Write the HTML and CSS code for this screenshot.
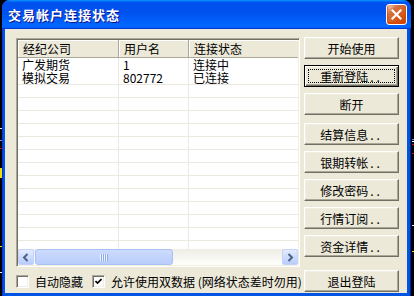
FILE: index.html
```html
<!DOCTYPE html>
<html lang="zh-CN">
<head>
  <meta charset="UTF-8">
  <title>交易帐户连接状态</title>
  <link rel="stylesheet" href="styles.css">
</head>
<body>
  <!-- chart behind the dialog -->
  <div class="chart">
    <span class="mark white" style="left:0;top:128px"></span>
    <span class="mark blue" style="left:0;top:140px"></span>
    <span class="mark red" style="left:0;top:148px"></span>
    <span class="mark yellow tall" style="left:0;top:168px"></span>
    <span class="mark yellow" style="left:0;top:246px"></span>
    <span class="mark white" style="left:0;top:272px"></span>
    <span class="mark blue" style="right:0;top:139px"></span>
    <span class="mark white" style="right:0;top:141px"></span>
    <span class="mark red" style="right:0;top:144px"></span>
    <span class="mark red" style="right:0;top:153px"></span>
    <span class="mark white" style="right:0;top:225px"></span>
    <span class="mark yellow" style="right:0;top:251px"></span>
  </div>

  <div class="window">
    <div class="titlebar">
      <span class="title">交易帐户连接状态</span>
      <button class="close" aria-label="关闭">
        <svg width="11" height="11" viewBox="0 0 11 11">
          <path d="M1.5 1.5 L9.5 9.5 M9.5 1.5 L1.5 9.5" stroke="#fff" stroke-width="2.2" stroke-linecap="square"/>
        </svg>
      </button>
    </div>

    <div class="client">
      <div class="left">
        <div class="listview">
          <div class="lv-row lv-head">
            <div>经纪公司</div><div>用户名</div><div>连接状态</div>
          </div>
          <div class="lv-body">
            <div class="lv-row item"><div>广发期货</div><div>1</div><div>连接中</div></div>
            <div class="lv-row item"><div>模拟交易</div><div>802772</div><div>已连接</div></div>
            <div class="lv-row empty"><div></div><div></div><div></div></div>
            <div class="lv-row empty"><div></div><div></div><div></div></div>
            <div class="lv-row empty"><div></div><div></div><div></div></div>
            <div class="lv-row empty"><div></div><div></div><div></div></div>
            <div class="lv-row empty"><div></div><div></div><div></div></div>
            <div class="lv-row empty"><div></div><div></div><div></div></div>
            <div class="lv-row empty"><div></div><div></div><div></div></div>
            <div class="lv-row empty"><div></div><div></div><div></div></div>
            <div class="lv-row empty"><div></div><div></div><div></div></div>
            <div class="lv-row empty"><div></div><div></div><div></div></div>
            <div class="lv-row empty"><div></div><div></div><div></div></div>
            <div class="lv-row empty"><div></div><div></div><div></div></div>
            <div class="lv-row empty"><div></div><div></div><div></div></div>
          </div>
          <div class="hscroll">
            <span class="sb-btn">
              <svg width="8" height="9" viewBox="0 0 8 9"><path d="M5.5 1 L2 4.5 L5.5 8" fill="none" stroke="#4d6185" stroke-width="2"/></svg>
            </span>
            <div class="sb-track">
              <span class="sb-thumb"><span class="grip"></span></span>
            </div>
            <span class="sb-btn">
              <svg width="8" height="9" viewBox="0 0 8 9"><path d="M2.5 1 L6 4.5 L2.5 8" fill="none" stroke="#4d6185" stroke-width="2"/></svg>
            </span>
          </div>
        </div>

        <div class="options">
          <label class="check"><span class="box"></span>自动隐藏</label>
          <label class="check">
            <span class="box">
              <svg width="7" height="7" viewBox="0 0 7 7"><path d="M0.5 3 L2.5 5 L6.5 1" fill="none" stroke="#000" stroke-width="1.6"/></svg>
            </span>允许使用双数据 (网络状态差时勿用)
          </label>
        </div>
      </div>

      <div class="buttons">
        <button class="btn">开始使用</button>
        <button class="btn default">重新登陆<span class="dots">..</span></button>
        <button class="btn">断开</button>
        <button class="btn sep">结算信息<span class="dots">..</span></button>
        <button class="btn">银期转帐<span class="dots">..</span></button>
        <button class="btn">修改密码<span class="dots">..</span></button>
        <button class="btn">行情订阅<span class="dots">..</span></button>
        <button class="btn">资金详情<span class="dots">..</span></button>
        <button class="btn exit">退出登陆</button>
      </div>
    </div>
  </div>
</body>
</html>
```

FILE: styles.css
```css
body {
    margin: 0;
    width: 414px;
    height: 296px;
    overflow: hidden;
    position: relative;
    background-color: #000;
    font-family: "Noto Sans CJK SC", "Noto Sans", sans-serif;
    font-size: 12px;
    color: #000;
}

/* bits of the chart window showing round the dialog */
.mark {
    position: absolute;
    width: 2px;
    height: 1px;
}
.mark.white { background-color: #f0f0f0; }
.mark.blue { background-color: #6a8cff; }
.mark.red { background-color: #e01010; }
.mark.yellow { background-color: #f0e000; }
.mark.tall { height: 10px; }

.window {
    position: relative;
    width: 409px;
    height: 296px;
    margin-left: 2px;
    display: flex;
    flex-direction: column;
    background-color: #0054e3;
    border-radius: 8px 8px 0 0;
    box-shadow: inset 1px 0 #0831d9, inset -1px 0 #001ea0;
}

.titlebar {
    height: 29px;
    flex: none;
    display: flex;
    align-items: center;
    justify-content: space-between;
    padding: 0 4px 0 6px;
    border-radius: 8px 8px 0 0;
    background: linear-gradient(to bottom, #0997ff 0, #0053ee 8%, #0050ee 40%, #0066ff 88%, #0066ff 93%, #005bff 95%, #003dd7 96%, #003dd7 100%);
}
.title {
    color: #fff;
    font-weight: bold;
    font-size: 13px;
    letter-spacing: 1px;
    text-shadow: 1px 1px #0f1089;
}
.close {
    width: 21px;
    height: 21px;
    padding: 0;
    border: 1px solid #fff;
    border-radius: 3px;
    display: flex;
    align-items: center;
    justify-content: center;
    background: radial-gradient(circle at 90% 90%, #cc4600 0, #dc6527 55%, #cd7546 70%, #ffccb2 90%, #fff 100%);
    box-shadow: inset 0 -1px 2px 1px #da4600;
}

.client {
    flex: 1;
    display: flex;
    margin: 0 4px 3px 3px;
    background-color: #ece9d8;
}

.left {
    width: 284px;
    padding: 9px 0 0 11px;
}

/* list view */
.listview {
    height: 229px;
    box-sizing: border-box;
    padding: 1px;
    border: 1px solid;
    border-color: #aca899 #fff #fff #aca899;
    box-shadow: inset 1px 1px #716f64, inset -1px -1px #f1efe2;
    background-color: #fff;
    display: flex;
    flex-direction: column;
}
.lv-row {
    display: grid;
    grid-template-columns: 101px 70px 109px;
}
.lv-head {
    height: 18px;
    flex: none;
    background-color: #ece9d8;
}
.lv-head div {
    padding-left: 5px;
    line-height: 17px;
    border-right: 1px solid #aca899;
    border-bottom: 1px solid #aca899;
    box-shadow: inset 1px 1px #fff;
}
.lv-head div:last-child {
    border-right: none;
}
.lv-body {
    flex: 1;
    overflow: hidden;
}
.item {
    height: 13px;
    line-height: 13px;
}
.item div {
    padding-left: 4px;
    white-space: nowrap;
    border-right: 1px solid #ebe9e0;
}
.empty {
    height: 13px;
    box-sizing: border-box;
    border-top: 1px solid #ebe9e0;
}
.item div:last-child,
.empty div:last-child {
    border-right: none;
}
.empty div {
    border-right: 1px solid #ebe9e0;
}

/* horizontal scrollbar */
.hscroll {
    height: 16px;
    flex: none;
    display: flex;
    background: linear-gradient(to bottom, #eeede5, #fefefb);
}
.sb-btn {
    width: 16px;
    height: 16px;
    box-sizing: border-box;
    border: 1px solid #c3d3fd;
    border-radius: 2px;
    display: flex;
    align-items: center;
    justify-content: center;
    background: linear-gradient(to bottom, #e3ebff, #b9cdfb);
}
.sb-track {
    flex: 1;
    display: flex;
    padding: 0 1px;
}
.sb-thumb {
    width: 138px;
    box-sizing: border-box;
    border: 1px solid #a9c0f6;
    border-radius: 3px;
    display: flex;
    align-items: center;
    justify-content: center;
    background: linear-gradient(to bottom, #cddbfd, #b8cdfb);
}
.grip {
    width: 8px;
    height: 7px;
    background: repeating-linear-gradient(to right, #eef3fe 0 1px, #8cabf2 1px 2px);
}

/* checkboxes */
.options {
    height: 21px;
    margin-top: 4px;
    display: flex;
    align-items: center;
    gap: 9px;
}
.check {
    display: flex;
    align-items: center;
    gap: 6px;
    white-space: nowrap;
}
.box {
    width: 13px;
    height: 13px;
    box-sizing: border-box;
    border: 1px solid;
    border-color: #aca899 #fff #fff #aca899;
    box-shadow: inset 1px 1px #716f64, inset -1px -1px #f1efe2;
    background-color: #fff;
    display: flex;
    align-items: center;
    justify-content: center;
}

/* button column */
.buttons {
    width: 95px;
    margin-left: 4px;
    padding: 8px 0 1px;
    display: flex;
    flex-direction: column;
    gap: 6px;
}
.btn {
    height: 22px;
    flex: none;
    box-sizing: border-box;
    padding: 0;
    font: inherit;
    color: #000;
    background-color: #ece9d8;
    border: 1px solid;
    border-color: #fff #716f64 #716f64 #fff;
    box-shadow: inset -1px -1px #aca899, inset 1px 1px #f1efe2;
}
.btn .dots {
    letter-spacing: 3px;
    margin-left: 2px;
}
.btn.default {
    position: relative;
    border-color: #000;
    box-shadow: inset 1px 1px #fff, inset -1px -1px #716f64, inset -2px -2px #aca899;
}
.btn.default::after {
    content: "";
    position: absolute;
    inset: 3px;
    border: 1px dotted #000;
}
.btn.sep {
    margin-top: 2px;
}
.btn.exit {
    margin-top: auto;
}
```
